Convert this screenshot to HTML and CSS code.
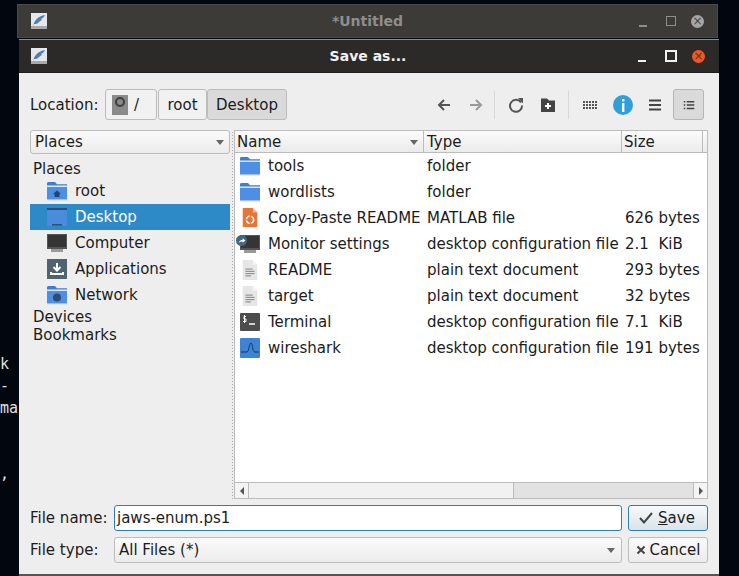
FILE: index.html
```html
<!DOCTYPE html>
<html lang="en">
<head>
    <meta charset="UTF-8">
    <meta name="viewport" content="width=device-width, initial-scale=1.0">
    <title>Save as...</title>
    <link rel="stylesheet" href="styles.css">
</head>
<body>
    <svg class="defs" width="0" height="0">
        <symbol id="feather" viewBox="0 0 16 16">
            <rect width="16" height="16" fill="#e4e8ec"/>
            <rect y="13" width="16" height="3" fill="#a9a9a9"/>
            <path d="M2 13C3 8 7 3 14 2C13 4 12 5 10 6L11 7C9 8 8 9 7 10C6 11 4 11 3 11Z" fill="#4f7fae"/>
        </symbol>
        <symbol id="folder" viewBox="0 0 20 20">
            <path d="M0 2.5C0 1.7.6 1 1.4 1H8l2 2.2h10V18.500H0Z" fill="#3f7fd0"/>
            <rect y="4.500" width="20" height="2.500" fill="#e3e7ec"/>
            <rect y="6" width="20" height="12.500" fill="#4d8fe4"/>
            <rect y="18.500" width="20" height="1" fill="#dadada"/>
        </symbol>
        <symbol id="monitor" viewBox="0 0 20 20">
            <rect width="20" height="15" y="1" fill="#555"/>
            <rect x="1" y="2" width="18" height="12" fill="#353535"/>
            <rect x="4" y="16" width="12" height="3" fill="#9a9a9a"/>
        </symbol>
        <symbol id="textfile" viewBox="0 0 20 22">
            <path d="M2 0H13L18 5V22H2Z" fill="#e6e6e6"/>
            <path d="M13 0L18 5H13Z" fill="#f6f6f6"/>
            <path d="M5 10H13M5 12.500H15M5 15H15M5 17.500H11" stroke="#7b7b7b"/>
        </symbol>
    </svg>

    <pre class="terminal">k
-
ma


,</pre>

    <div class="window back-window">
        <div class="titlebar">
            <svg class="app-icon"><use href="#feather"/></svg>
            <span class="title">*Untitled</span>
            <div class="win-btns">
                <span class="win-btn win-min"></span>
                <span class="win-btn win-max"></span>
                <span class="win-btn win-close">&#215;</span>
            </div>
        </div>
    </div>

    <div class="window dialog">
        <div class="titlebar">
            <svg class="app-icon"><use href="#feather"/></svg>
            <span class="title">Save as...</span>
            <div class="win-btns">
                <span class="win-btn win-min"></span>
                <span class="win-btn win-max"></span>
                <span class="win-btn win-close">&#215;</span>
            </div>
        </div>

        <div class="dialog-body">
            <div class="toolbar">
                <span class="location-label">Location:</span>
                <div class="path-bar">
                    <button class="path-btn path-root">
                        <svg width="16" height="20" viewBox="0 0 16 20"><rect width="16" height="20" fill="#8a8a8a"/><circle cx="8" cy="7" r="4" fill="none" stroke="#3d3d3d" stroke-width="2"/></svg>
                        <span>/</span>
                    </button>
                    <button class="path-btn path-name">root</button>
                    <button class="path-btn path-name is-current">Desktop</button>
                </div>
                <div class="tools">
                    <svg class="tool" viewBox="0 0 16 16"><path d="M14 8H3M8 3L3 8L8 13" fill="none" stroke="#555" stroke-width="2"/></svg>
                    <svg class="tool gap-tool" viewBox="0 0 16 16"><path d="M2 8H13M8 3L13 8L8 13" fill="none" stroke="#999" stroke-width="2"/></svg>
                    <span class="tool-sep first-sep"></span>
                    <svg class="tool" viewBox="0 0 16 16"><path d="M13 5.500A6 6 0 1 0 14 8.500" fill="none" stroke="#555" stroke-width="2"/><path d="M10 1L15 1V6.500Z" fill="#555"/></svg>
                    <svg class="tool gap-tool" viewBox="0 0 16 16"><path d="M1 1.500H7L9 3.500H15V15H1Z" fill="#444"/><path d="M8 6V12M5 9H11" stroke="#fff" stroke-width="2"/></svg>
                    <span class="tool-sep"></span>
                    <svg class="tool" viewBox="0 0 16 16"><path d="M1 5H15M1 8H15M1 11H15" stroke="#555" stroke-width="2" stroke-dasharray="2 1"/></svg>
                    <svg class="tool info" viewBox="0 0 20 20"><circle cx="10" cy="10" r="10" fill="#2f9fdc"/><rect x="9" y="8" width="2.400" height="9" fill="#fff"/><rect x="9" y="4" width="2.400" height="2.400" fill="#fff"/></svg>
                    <svg class="tool gap-tool" viewBox="0 0 16 16"><path d="M2 3.500H14M2 8H14M2 12.500H14" stroke="#444" stroke-width="2"/></svg>
                    <button class="view-toggle">
                        <svg class="tool" viewBox="0 0 16 16"><path d="M1 3.500H3M5 3.500H15M1 8H3M5 8H15M1 12.500H3M5 12.500H15" stroke="#444" stroke-width="2"/></svg>
                    </button>
                </div>
            </div>

            <div class="main">
                <div class="sidebar">
                    <div class="combo places-combo">Places<span class="arrow"></span></div>
                    <div class="group-label">Places</div>
                    <div class="place">
                        <svg class="row-icon" viewBox="0 0 20 20"><use href="#folder"/><path d="M10 9.500L14 13H12.500V16H7.500V13H6Z" fill="#23456e"/></svg>root
                    </div>
                    <div class="place is-selected">
                        <svg class="row-icon" viewBox="0 0 20 20"><rect y="1" width="20" height="18" fill="#4a8bdb"/><rect y="1" width="20" height="2" fill="#2b4f7a"/><rect x="5" y="17" width="10" height="1.500" fill="#2b4f7a"/></svg>Desktop
                    </div>
                    <div class="place">
                        <svg class="row-icon"><use href="#monitor"/></svg>Computer
                    </div>
                    <div class="place">
                        <svg class="row-icon" viewBox="0 0 20 20"><rect width="20" height="20" fill="#50646f"/><path d="M10 4V11M6.500 8L10 11.500L13.500 8" fill="none" stroke="#fff" stroke-width="2"/><path d="M4 13V15H16V13" fill="none" stroke="#fff" stroke-width="2"/></svg>Applications
                    </div>
                    <div class="place">
                        <svg class="row-icon" viewBox="0 0 20 20"><use href="#folder"/><circle cx="10" cy="12.500" r="4" fill="#2f4d70"/></svg>Network
                    </div>
                    <div class="group-label">Devices</div>
                    <div class="group-label">Bookmarks</div>
                </div>

                <div class="splitter"></div>

                <div class="file-pane">
                    <div class="file-grid file-head">
                        <div class="head-cell">Name<span class="arrow"></span></div>
                        <div class="head-cell">Type</div>
                        <div class="head-cell size-head">Size</div>
                        <div class="head-cell"></div>
                    </div>
                    <div class="file-list">
                        <div class="file-grid file-row">
                            <div class="name-cell"><svg class="row-icon"><use href="#folder"/></svg><span>tools</span></div>
                            <div class="cell">folder</div><div class="cell"></div>
                        </div>
                        <div class="file-grid file-row">
                            <div class="name-cell"><svg class="row-icon"><use href="#folder"/></svg><span>wordlists</span></div>
                            <div class="cell">folder</div><div class="cell"></div>
                        </div>
                        <div class="file-grid file-row">
                            <div class="name-cell">
                                <svg class="row-icon" viewBox="0 0 20 22"><path d="M2 0H13L18 5V21H2Z" fill="#ea7435"/><path d="M13 0L18 5H13Z" fill="#f4b08c"/><circle cx="10" cy="13" r="4" fill="none" stroke="#fff" stroke-width="1.500" stroke-dasharray="5 1.500"/></svg>
                                <span>Copy-Paste README</span>
                            </div>
                            <div class="cell">MATLAB file</div><div class="cell">626 bytes</div>
                        </div>
                        <div class="file-grid file-row">
                            <div class="name-cell">
                                <svg class="row-icon"><use href="#monitor"/></svg>
                                <svg class="link-badge" viewBox="0 0 10 10"><circle cx="5" cy="5" r="5" fill="#45667f"/><path d="M2.500 7C3 5 4.500 4.500 6 4.500V3L8.500 5L6 7V5.800C4.500 5.800 3.500 6 2.500 7Z" fill="#fff"/></svg>
                                <span>Monitor settings</span>
                            </div>
                            <div class="cell">desktop configuration file</div><div class="cell">2.1&nbsp; KiB</div>
                        </div>
                        <div class="file-grid file-row">
                            <div class="name-cell"><svg class="row-icon"><use href="#textfile"/></svg><span>README</span></div>
                            <div class="cell">plain text document</div><div class="cell">293 bytes</div>
                        </div>
                        <div class="file-grid file-row">
                            <div class="name-cell"><svg class="row-icon"><use href="#textfile"/></svg><span>target</span></div>
                            <div class="cell">plain text document</div><div class="cell">32 bytes</div>
                        </div>
                        <div class="file-grid file-row">
                            <div class="name-cell">
                                <svg class="row-icon" viewBox="0 0 20 20"><rect y="1" width="20" height="18" rx="1" fill="#4d4d4d"/><path d="M9 12H15" stroke="#fff" stroke-width="1.500"/><path d="M6 4.500H4V7H6V9.500H3M4.500 3V11" fill="none" stroke="#fff"/></svg>
                                <span>Terminal</span>
                            </div>
                            <div class="cell">desktop configuration file</div><div class="cell">7.1&nbsp; KiB</div>
                        </div>
                        <div class="file-grid file-row">
                            <div class="name-cell">
                                <svg class="row-icon" viewBox="0 0 20 20"><rect width="20" height="20" rx="1" fill="#3f83d6"/><path d="M1 14H7C9 14 9 5 11 5C13 5 12 14 15 14H19" fill="none" stroke="#17375c"/></svg>
                                <span>wireshark</span>
                            </div>
                            <div class="cell">desktop configuration file</div><div class="cell">191 bytes</div>
                        </div>
                    </div>
                    <div class="hscroll">
                        <span class="scroll-btn"><span class="tri-left"></span></span>
                        <span class="scroll-thumb"></span>
                        <span class="scroll-trough"></span>
                        <span class="scroll-btn scroll-btn-end"><span class="tri-right"></span></span>
                    </div>
                </div>
            </div>

            <div class="form-grid">
                <label class="form-label">File name:</label>
                <div class="name-input">jaws-enum.ps1</div>
                <button class="action-btn save-btn">
                    <svg width="16" height="14" viewBox="0 0 16 14"><path d="M2 7L6 11.500L14 2" fill="none" stroke="#444" stroke-width="2"/></svg>
                    <span><u>S</u>ave</span>
                </button>
                <label class="form-label">File type:</label>
                <div class="combo type-combo">All Files (*)<span class="arrow"></span></div>
                <button class="action-btn">
                    <svg width="10" height="10" viewBox="0 0 10 10"><path d="M1.500 1.500L8.500 8.500M8.500 1.500L1.500 8.500" stroke="#444" stroke-width="2"/></svg>
                    <span>Cancel</span>
                </button>
            </div>
        </div>
    </div>
</body>
</html>
```

FILE: styles.css
```css
body {
    margin: 0;
    width: 739px;
    height: 576px;
    overflow: hidden;
    position: relative;
    background-color: #02060f;
    font-family: "DejaVu Sans", sans-serif;
    font-size: 15px;
    color: #1c1c1c;
}

.defs {
    position: absolute;
}

.terminal {
    position: absolute;
    left: 0;
    top: 353px;
    margin: 0;
    font-family: "DejaVu Sans Mono", monospace;
    font-size: 15px;
    line-height: 22px;
    color: #e0e0e0;
}

/* windows */
.window {
    position: absolute;
}

.back-window {
    left: 17px;
    top: 4px;
    width: 701px;
    height: 34px;
    border: 1px solid #4a4a48;
    box-sizing: border-box;
    background-color: #3c3b38;
}

.dialog {
    left: 19px;
    top: 39px;
    width: 700px;
    height: 537px;
    box-sizing: border-box;
    display: flex;
    flex-direction: column;
    border-top: 1px solid #8d8d8b;
    border-bottom: 2px solid #555;
    background-color: #eeeeee;
}

.titlebar {
    height: 32px;
    flex: none;
    display: grid;
    grid-template-columns: 1fr auto 1fr;
    align-items: center;
    padding-left: 12px;
    padding-right: 14px;
    box-sizing: border-box;
}

.back-window .titlebar {
    height: 32px;
    padding-left: 13px;
    padding-right: 13px;
}

.dialog .titlebar {
    background-color: #2b2a28;
    height: 33px;
    border-bottom: 1px solid #1e1e1c;
}

.app-icon {
    width: 16px;
    height: 16px;
}

.title {
    text-align: center;
    font-size: 14px;
    font-weight: bold;
    color: #f0f0f0;
}

.back-window .title {
    color: #8e8e8c;
}

.win-btns {
    display: flex;
    align-items: center;
    justify-content: flex-end;
}

.win-btn {
    display: block;
    width: 13px;
    height: 13px;
    box-sizing: border-box;
}

.win-min {
    border-bottom: 2px solid #f0f0f0;
    height: 11px;
    width: 8px;
}

.win-max {
    border: 2px solid #f0f0f0;
    width: 8px;
    height: 8px;
    margin-left: 19px;
    box-sizing: content-box;
}

.win-close {
    border-radius: 50%;
    background-color: #ea5a24;
    color: #6d2a10;
    font-size: 12px;
    line-height: 13px;
    text-align: center;
    margin-left: 15px;
}

.back-window .win-min {
    border-bottom-color: #8e8e8c;
}

.back-window .win-max {
    border-width: 1px;
    border-color: #8e8e8c;
    width: 8px;
    height: 8px;
}

.back-window .win-close {
    background-color: #a5a5a3;
    color: #444;
}

.dialog-body {
    flex: 1;
    display: flex;
    flex-direction: column;
    padding: 16px 11px 0 11px;
}

/* location row */
.toolbar {
    height: 31px;
    display: flex;
    align-items: center;
}

.location-label {
    width: 75px;
}

.path-bar {
    display: flex;
    height: 31px;
}

.path-btn {
    font: inherit;
    color: inherit;
    height: 31px;
    margin: 0;
    padding: 0;
    border: 1px solid #bcbcbc;
    border-radius: 3px;
    background-color: #f1f1f1;
}

.path-root {
    width: 52px;
    margin-right: 1px;
    display: flex;
    align-items: center;
    gap: 6px;
    padding-left: 6px;
}

.path-name {
    width: 49px;
}

.is-current {
    width: 80px;
    background-color: #dadada;
}

.tools {
    margin-left: auto;
    margin-right: 4px;
    display: flex;
    align-items: center;
}

.tool {
    width: 16px;
    height: 16px;
    margin-left: 9px;
    margin-right: 8px;
}

.gap-tool {
    margin-left: 8px;
}

.info {
    width: 20px;
    height: 20px;
    margin-left: 7px;
    margin-right: 6px;
}

.tool-sep {
    width: 1px;
    height: 28px;
    background-color: #d8d8d8;
    margin: 0 4px 0 4px;
}

.first-sep {
    margin-left: 2px;
}

.view-toggle {
    width: 31px;
    height: 31px;
    margin-left: 2px;
    padding: 0;
    display: flex;
    align-items: center;
    justify-content: center;
    border: 1px solid #b5b5b5;
    border-radius: 3px;
    background-color: #dadada;
}

/* sidebar and file list */
.main {
    flex: none;
    margin-top: 10px;
    height: 369px;
    display: flex;
}

.sidebar {
    width: 200px;
    flex: none;
}

.combo {
    position: relative;
    border: 1px solid #bcbcbc;
    border-radius: 3px;
    background: linear-gradient(#fafafa, #ececec);
    box-sizing: border-box;
}

.places-combo {
    height: 24px;
    line-height: 22px;
    padding-left: 4px;
    margin-bottom: 6px;
}

.arrow {
    position: absolute;
    right: 5px;
    top: 50%;
    margin-top: -2px;
    width: 0;
    height: 0;
    border-left: 4px solid transparent;
    border-right: 4px solid transparent;
    border-top: 5px solid #666;
}

.group-label {
    height: 18px;
    line-height: 18px;
    padding-left: 3px;
}

.place {
    height: 26px;
    padding-left: 17px;
    display: flex;
    align-items: center;
    gap: 8px;
}

.is-selected {
    background-color: #2d8ac7;
    color: #fff;
}

.row-icon {
    width: 20px;
    height: 20px;
    flex: none;
}

.splitter {
    width: 4px;
    flex: none;
    background: radial-gradient(circle, #aaa 0.7px, transparent 1px) 1px 178px / 2px 3px repeat-y;
    background-size: 3px 3px;
    background-clip: content-box;
}

.file-pane {
    width: 474px;
    flex: none;
    border: 1px solid #bcbcbc;
    box-sizing: border-box;
    background-color: #fff;
    display: flex;
    flex-direction: column;
}

.file-grid {
    display: grid;
    grid-template-columns: 189px 198px 81px auto;
}

.file-head {
    height: 22px;
    flex: none;
    box-sizing: border-box;
    border-bottom: 1px solid #bcbcbc;
    background: linear-gradient(#fbfbfb, #ebebeb);
}

.head-cell {
    position: relative;
    padding-left: 2px;
    line-height: 22px;
    border-right: 1px solid #bcbcbc;
    box-sizing: border-box;
}

.head-cell + .head-cell {
    padding-left: 3px;
}

.head-cell.size-head {
    padding-left: 2px;
}

.head-cell:last-child {
    border-right: none;
}

.head-cell .arrow {
    right: 5px;
}

.file-list {
    flex: 1;
    overflow: hidden;
}

.file-row {
    height: 26px;
    align-items: center;
}

.name-cell {
    position: relative;
    display: flex;
    align-items: center;
    gap: 8px;
    padding-left: 5px;
    overflow: hidden;
    white-space: nowrap;
}

.link-badge {
    position: absolute;
    left: 1px;
    top: 1px;
    width: 11px;
    height: 11px;
}

.cell {
    padding-left: 3px;
    white-space: nowrap;
    overflow: hidden;
}

.hscroll {
    height: 15px;
    flex: none;
    display: flex;
    border-top: 1px solid #bcbcbc;
    background-color: #e2e2e2;
}

.scroll-btn {
    width: 14px;
    flex: none;
    display: flex;
    align-items: center;
    justify-content: center;
    background-color: #f4f4f4;
    border-right: 1px solid #bcbcbc;
    box-sizing: border-box;
}

.scroll-btn-end {
    border-right: none;
    border-left: 1px solid #bcbcbc;
}

.scroll-thumb {
    width: 264px;
    flex: none;
    background-color: #f1f1f1;
    border-right: 1px solid #bcbcbc;
}

.scroll-trough {
    flex: 1;
}

.tri-left {
    border-top: 4px solid transparent;
    border-bottom: 4px solid transparent;
    border-right: 4px solid #555;
}

.tri-right {
    border-top: 4px solid transparent;
    border-bottom: 4px solid transparent;
    border-left: 4px solid #555;
}

/* file name and type */
.form-grid {
    margin-top: 6px;
    display: grid;
    grid-template-columns: 78px 508px 80px;
    column-gap: 6px;
    row-gap: 6px;
    grid-template-rows: 26px 26px;
    align-items: center;
}

.form-label {
    display: block;
    white-space: nowrap;
}

.name-input {
    height: 26px;
    line-height: 25px;
    padding-left: 2px;
    border: 1px solid #2d7fb5;
    border-radius: 3px;
    background-color: #fff;
    box-sizing: border-box;
}

.type-combo {
    height: 26px;
    line-height: 24px;
    padding-left: 4px;
}

.type-combo .arrow {
    right: 6px;
}

.action-btn {
    font: inherit;
    color: inherit;
    height: 26px;
    padding: 0;
    display: flex;
    align-items: center;
    justify-content: center;
    gap: 4px;
    border: 1px solid #bcbcbc;
    border-radius: 3px;
    background: linear-gradient(#fafafa, #ececec);
}

.save-btn {
    padding-right: 3px;
    border-color: #2d7fb5;
    background: linear-gradient(#f8fafb, #d9e3ea);
}
```
